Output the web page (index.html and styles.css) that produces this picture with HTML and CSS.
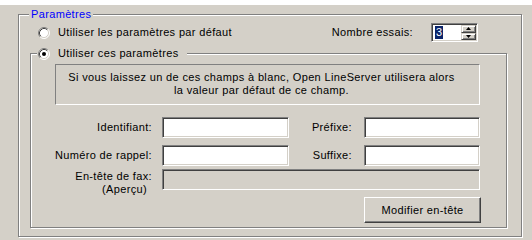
FILE: index.html
```html
<!DOCTYPE html>
<html lang="fr">
<head>
<meta charset="utf-8">
<title>Paramètres</title>
<link rel="stylesheet" href="styles.css">
</head>
<body>
<div class="strip"></div>
<div class="outer">
  <span class="legend">Paramètres</span>
  <div class="row1">
    <div class="radio">
      <svg class="rb" width="12" height="12" viewBox="0 0 12 12">
        <circle cx="6" cy="6" r="5" fill="#fff"/>
        <path d="M2.11 9.89A5.5 5.5 0 0 1 9.89 2.11" fill="none" stroke="#808080"/>
        <path d="M9.89 2.11A5.5 5.5 0 0 1 2.11 9.89" fill="none" stroke="#fff"/>
        <path d="M2.82 9.18A4.5 4.5 0 0 1 9.18 2.82" fill="none" stroke="#404040"/>
        <path d="M9.18 2.82A4.5 4.5 0 0 1 2.82 9.18" fill="none" stroke="#d4d0c8"/>
      </svg>
      <span>Utiliser les paramètres par défaut</span>
    </div>
    <span class="essais-label">Nombre essais:</span>
    <div class="spin">
      <div class="spin-field"><span class="sel">3</span></div>
      <div class="spin-btns">
        <div class="sbtn"><svg width="5" height="3" viewBox="0 0 5 3"><path d="M2.5 0L5 3H0Z" fill="#000"/></svg></div>
        <div class="sbtn"><svg width="5" height="3" viewBox="0 0 5 3"><path d="M0 0H5L2.5 3Z" fill="#000"/></svg></div>
      </div>
    </div>
  </div>
  <div class="inner">
    <div class="radio legend2">
      <svg class="rb" width="12" height="12" viewBox="0 0 12 12">
        <circle cx="6" cy="6" r="5" fill="#fff"/>
        <path d="M2.11 9.89A5.5 5.5 0 0 1 9.89 2.11" fill="none" stroke="#808080"/>
        <path d="M9.89 2.11A5.5 5.5 0 0 1 2.11 9.89" fill="none" stroke="#fff"/>
        <path d="M2.82 9.18A4.5 4.5 0 0 1 9.18 2.82" fill="none" stroke="#404040"/>
        <path d="M9.18 2.82A4.5 4.5 0 0 1 2.82 9.18" fill="none" stroke="#d4d0c8"/>
        <circle cx="6" cy="6" r="2" fill="#000"/>
      </svg>
      <span>Utiliser ces paramètres</span>
    </div>
    <div class="info">Si vous laissez un de ces champs à blanc, Open LineServer utilisera alors<br>la valeur par défaut de ce champ.</div>
    <div class="frow r1">
      <div class="lbl">Identifiant:</div>
      <div class="edit w1"></div>
      <div class="lbl2">Préfixe:</div>
      <div class="edit w2"></div>
    </div>
    <div class="frow r2">
      <div class="lbl">Numéro de rappel:</div>
      <div class="edit w1"></div>
      <div class="lbl2">Suffixe:</div>
      <div class="edit w2"></div>
    </div>
    <div class="frow r3">
      <div class="lbl multi">En-tête de fax:<br><span class="apercu">(Aperçu)</span></div>
      <div class="edit disabled wide"></div>
    </div>
    <div class="brow">
      <button class="btn" type="button">Modifier en-tête</button>
    </div>
  </div>
</div>
</body>
</html>
```
FILE: styles.css
```css
* { box-sizing: border-box; }

body {
  margin: 0;
  width: 532px;
  height: 240px;
  overflow: hidden;
  background: #d4d0c8;
  font: 11px/13px "Liberation Sans", Arial, sans-serif;
  letter-spacing: 0.35px;
  color: #000;
}

.strip {
  height: 5px;
  background: #fff;
}

.outer {
  position: relative;
  margin: 9px 0 0 18px;
  width: 504px;
  height: 223px;
  border: 1px solid #808080;
  box-shadow: inset 1px 1px 0 #fff, 1px 1px 0 #fff;
}

.legend {
  position: absolute;
  top: -7px;
  left: 10px;
  padding: 0 2px;
  background: #d4d0c8;
  color: #0000ff;
}

.row1 {
  display: flex;
  align-items: center;
  height: 19px;
  margin-top: 8px;
  padding-left: 19px;
}

.radio {
  display: flex;
  align-items: center;
  gap: 8px;
  white-space: nowrap;
}

.rb { display: block; flex: none; }

.essais-label {
  margin-left: auto;
  margin-right: 18px;
}

.spin {
  display: flex;
  width: 47px;
  height: 19px;
  margin-right: 43px;
  border: 1px solid;
  border-color: #808080 #fff #fff #808080;
  box-shadow: inset 1px 1px 0 #404040, inset -1px -1px 0 #d4d0c8;
  background: #fff;
  padding: 2px;
}

.spin-field {
  flex: 1;
  display: flex;
  align-items: center;
  padding-left: 1px;
}

.sel {
  background: #0a246a;
  color: #fff;
  line-height: 13px;
  padding: 0 1px;
}

.spin-btns {
  display: flex;
  flex-direction: column;
  width: 15px;
  margin: -1px -1px -1px 0;
}

.sbtn {
  flex: 1;
  display: flex;
  align-items: center;
  justify-content: center;
  background: #d4d0c8;
  border: 1px solid;
  border-color: #d4d0c8 #404040 #404040 #d4d0c8;
  box-shadow: inset 1px 1px 0 #fff, inset -1px -1px 0 #808080;
}

.sbtn svg { display: block; }

.inner {
  position: relative;
  margin: 11px 0 0 11px;
  width: 477px;
  height: 175px;
  border: 1px solid #808080;
  box-shadow: inset 1px 1px 0 #fff, 1px 1px 0 #fff;
}

.legend2 {
  position: absolute;
  top: -7px;
  left: 6px;
  padding: 0 8px 0 1px;
  background: #d4d0c8;
}

.info {
  margin: 10px 0 0 24px;
  width: 425px;
  height: 41px;
  border: 1px solid;
  border-color: #808080 #fff #fff #808080;
  text-align: center;
  padding-top: 6px;
  padding-right: 12px;
  white-space: nowrap;
}

.frow {
  display: flex;
  align-items: center;
  height: 21px;
  margin-left: -10px;
}

.r1 { margin-top: 12px; }
.r2 { margin-top: 7px; }
.r3 { margin-top: 3px; }

.lbl {
  width: 141px;
  padding-right: 10px;
  text-align: right;
  white-space: nowrap;
}

.lbl.multi {
  align-self: flex-start;
  padding-top: 1px;
  height: 21px;
}

.apercu {
  display: inline-block;
  padding-right: 5px;
}

.lbl2 {
  width: 75px;
  padding-right: 12px;
  text-align: right;
  white-space: nowrap;
}

.edit {
  height: 21px;
  background: #fff;
  border: 1px solid;
  border-color: #808080 #fff #fff #808080;
  box-shadow: inset 1px 1px 0 #404040, inset -1px -1px 0 #d4d0c8;
}

.w1 { width: 127px; }
.w2 { width: 116px; }
.wide { width: 318px; }

.edit.disabled { background: #d4d0c8; }

.brow {
  display: flex;
  margin-top: 7px;
  padding-left: 333px;
}

.btn {
  width: 117px;
  height: 26px;
  padding: 0;
  font: 11px/13px "Liberation Sans", Arial, sans-serif;
  letter-spacing: 0.35px;
  color: #000;
  background: #d4d0c8;
  border: 1px solid;
  border-color: #fff #404040 #404040 #fff;
  box-shadow: inset -1px -1px 0 #808080;
  border-radius: 0;
}
```
